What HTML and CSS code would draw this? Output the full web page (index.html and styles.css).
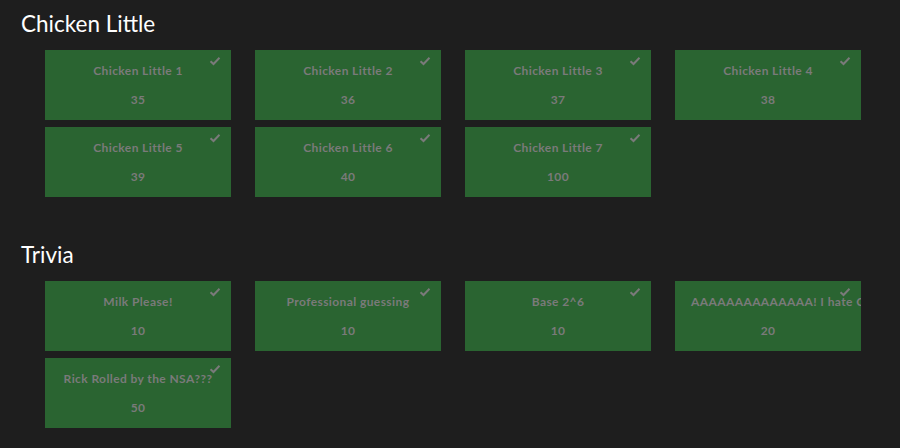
FILE: index.html
```html
<!DOCTYPE html>
<html>
<head>
<meta charset="utf-8">
<link rel="stylesheet" href="styles.css">
</head>
<body>
<section class="category">
  <h2 class="category-title">Chicken Little</h2>
  <div class="grid">
    <div class="card"><svg class="check" viewBox="0 0 12 10"><path d="M1.5 5.2 L4.5 8 L10.5 1.8"/></svg><div class="card-title">Chicken Little 1</div><div class="card-value">35</div></div>
    <div class="card"><svg class="check" viewBox="0 0 12 10"><path d="M1.5 5.2 L4.5 8 L10.5 1.8"/></svg><div class="card-title">Chicken Little 2</div><div class="card-value">36</div></div>
    <div class="card"><svg class="check" viewBox="0 0 12 10"><path d="M1.5 5.2 L4.5 8 L10.5 1.8"/></svg><div class="card-title">Chicken Little 3</div><div class="card-value">37</div></div>
    <div class="card"><svg class="check" viewBox="0 0 12 10"><path d="M1.5 5.2 L4.5 8 L10.5 1.8"/></svg><div class="card-title">Chicken Little 4</div><div class="card-value">38</div></div>
    <div class="card"><svg class="check" viewBox="0 0 12 10"><path d="M1.5 5.2 L4.5 8 L10.5 1.8"/></svg><div class="card-title">Chicken Little 5</div><div class="card-value">39</div></div>
    <div class="card"><svg class="check" viewBox="0 0 12 10"><path d="M1.5 5.2 L4.5 8 L10.5 1.8"/></svg><div class="card-title">Chicken Little 6</div><div class="card-value">40</div></div>
    <div class="card"><svg class="check" viewBox="0 0 12 10"><path d="M1.5 5.2 L4.5 8 L10.5 1.8"/></svg><div class="card-title">Chicken Little 7</div><div class="card-value">100</div></div>
  </div>
</section>
<section class="category">
  <h2 class="category-title">Trivia</h2>
  <div class="grid">
    <div class="card"><svg class="check" viewBox="0 0 12 10"><path d="M1.5 5.2 L4.5 8 L10.5 1.8"/></svg><div class="card-title">Milk Please!</div><div class="card-value">10</div></div>
    <div class="card"><svg class="check" viewBox="0 0 12 10"><path d="M1.5 5.2 L4.5 8 L10.5 1.8"/></svg><div class="card-title">Professional guessing</div><div class="card-value">10</div></div>
    <div class="card"><svg class="check" viewBox="0 0 12 10"><path d="M1.5 5.2 L4.5 8 L10.5 1.8"/></svg><div class="card-title">Base 2^6</div><div class="card-value">10</div></div>
    <div class="card"><svg class="check" viewBox="0 0 12 10"><path d="M1.5 5.2 L4.5 8 L10.5 1.8"/></svg><div class="card-title">AAAAAAAAAAAAAA! I hate CTFs</div><div class="card-value">20</div></div>
    <div class="card"><svg class="check" viewBox="0 0 12 10"><path d="M1.5 5.2 L4.5 8 L10.5 1.8"/></svg><div class="card-title">Rick Rolled by the NSA???</div><div class="card-value">50</div></div>
  </div>
</section>
</body>
</html>
```

FILE: styles.css
```css
html, body {
  margin: 0;
  padding: 0;
  background: #1e1e1e;
}
body {
  font-family: Lato, "Open Sans", sans-serif;
  padding: 0 0 0 21px;
}
.category {
  padding-bottom: 34px;
}
.category-title {
  margin: 0;
  padding-top: 10px;
  font-size: 22.5px;
  font-weight: 400;
  line-height: 28px;
  color: #ffffff;
}
.grid {
  display: flex;
  flex-wrap: wrap;
  gap: 7px 24px;
  padding-left: 24px;
  margin-top: 12px;
  width: 816px;
}
.card {
  position: relative;
  width: 186px;
  height: 70px;
  box-sizing: border-box;
  background: #2a6431;
  padding: 0 16px;
  overflow: hidden;
  display: flex;
  flex-direction: column;
  justify-content: center;
  gap: 13px;
  color: #7a7a7a;
  font-weight: 700;
  font-size: 12px;
  letter-spacing: 0.4px;
  text-align: center;
}
.card-title {
  line-height: 16px;
  white-space: nowrap;
}
.card-value {
  line-height: 16px;
}
.check {
  position: absolute;
  top: 6px;
  right: 10px;
  width: 12px;
  height: 10px;
  fill: none;
  stroke: #7a7a7a;
  stroke-width: 2;
}
```
